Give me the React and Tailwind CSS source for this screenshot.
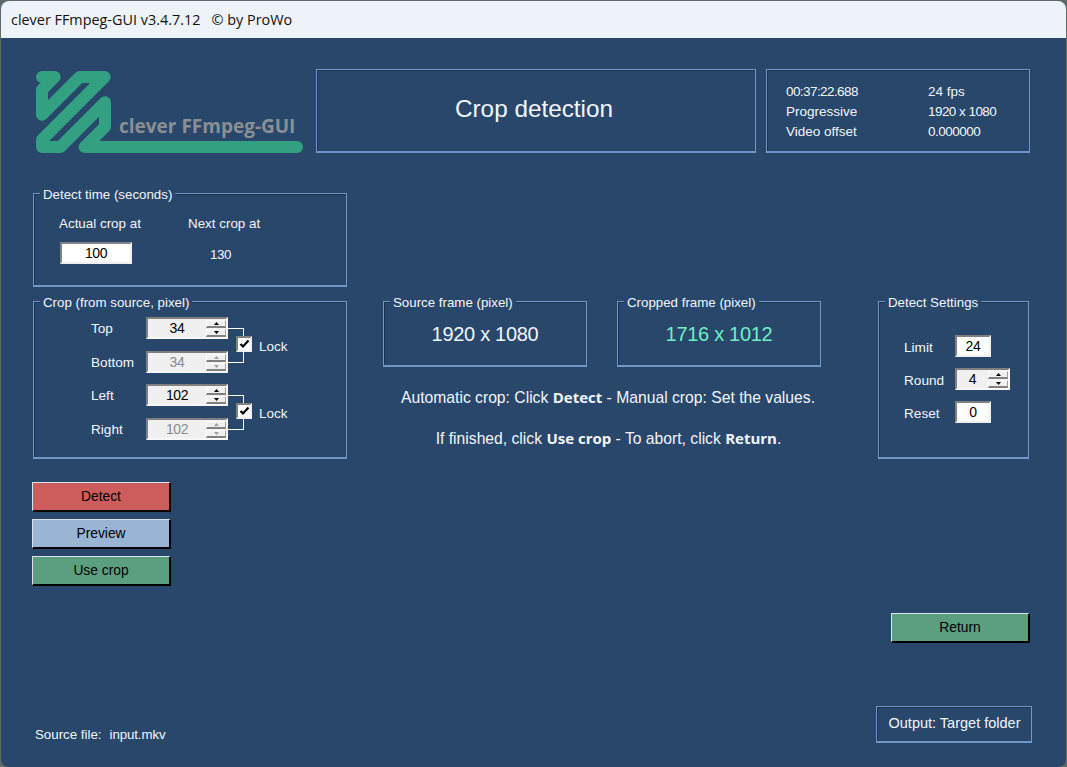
const arial = { fontFamily: '"Liberation Sans", Arial, sans-serif' };
const open = { fontFamily: '"Open Sans", sans-serif' };

function Group({ title, className = "", children }) {
  return (
    <fieldset className={`min-w-0 border border-b-2 border-[#6f97c9] shadow-[inset_1px_1px_0_#1b3150] ${className}`}>
      <legend className="ml-[6px] translate-y-[1px] bg-[#28476b] px-[3px] text-[13.3px] leading-[15px] text-[#f2f6fc]">{title}</legend>
      {children}
    </fieldset>
  );
}

function Box({ className = "", children }) {
  return (
    <div className={`border border-b-2 border-[#6f97c9] shadow-[inset_1px_1px_0_#1b3150] ${className}`}>{children}</div>
  );
}

function Arrow({ up, disabled }) {
  return (
    <svg width="5" height="3" viewBox="0 0 5 3">
      <path d={up ? "M2.5 0L5 3H0Z" : "M0 0H5L2.5 3Z"} fill={disabled ? "#a0a0a0" : "#000"} />
    </svg>
  );
}

function SpinBtn({ up, disabled }) {
  return (
    <div className="flex h-[8px] w-[20px] items-center justify-center border-t border-r border-b-2 border-l border-t-white border-r-[#a0a0a0] border-b-[#808080] border-l-white bg-[#f0f0f0]">
      <Arrow up={up} disabled={disabled} />
    </div>
  );
}

function Spin({ value, disabled, w = "w-[82px]" }) {
  return (
    <div className={`flex h-[22px] ${w} items-center border-2 border-t-[#808080] border-r-[#f8f8f8] border-b-[#f8f8f8] border-l-[#808080] bg-[#f0f0f0]`}>
      <span className={`flex-1 text-center text-[14px] tracking-[-0.4px] ${disabled ? "text-[#8a8a8a]" : "text-black"}`}>{value}</span>
      <div className="flex flex-col gap-[1px]">
        <SpinBtn up disabled={disabled} />
        <SpinBtn disabled={disabled} />
      </div>
    </div>
  );
}

function Field({ value, className = "" }) {
  return (
    <div className={`flex h-[22px] items-center justify-center border-2 border-t-[#808080] border-r-[#f0f0f0] border-b-[#f0f0f0] border-l-[#808080] bg-white text-[14px] tracking-[-0.4px] text-black ${className}`}>
      {value}
    </div>
  );
}

function LockPair({ a, b, aLabel, bLabel }) {
  return (
    <div className="relative flex flex-col gap-[12px] pl-[57px]">
      <div className="flex h-[22px] items-center">
        <span className="w-[55px] translate-y-[1px] text-[13.6px]">{aLabel}</span>
        <Spin value={a} />
      </div>
      <div className="flex h-[22px] items-center">
        <span className="w-[55px] translate-y-[1px] text-[13.6px]">{bLabel}</span>
        <Spin value={b} disabled />
      </div>
      <div className="absolute top-[11px] left-[194px] h-[8px] w-[16px] border-t border-r border-white" />
      <div className="absolute top-[35px] left-[194px] h-[11px] w-[16px] border-r border-b border-white" />
      <div className="absolute top-[19px] left-[202px] flex h-[16px] w-[16px] items-center justify-center border-2 border-t-[#808080] border-r-[#f0f0f0] border-b-[#f0f0f0] border-l-[#808080] bg-white">
        <svg width="11" height="10" viewBox="0 0 11 10">
          <path d="M1.5 5L4 7.5L9.5 1.5" fill="none" stroke="#000" strokeWidth="2.2" />
        </svg>
      </div>
      <span className="absolute top-[21px] left-[225px] text-[13.5px] leading-[17px]">Lock</span>
    </div>
  );
}

function Btn({ label, bg, className = "" }) {
  return (
    <div className={`flex h-[30px] w-[139px] items-center justify-center border border-r-2 border-b-2 border-t-[#d8e4ee] border-r-black border-b-black border-l-[#d8e4ee] pt-[1px] text-[13.8px] text-black ${bg} ${className}`}>
      {label}
    </div>
  );
}

export default function App() {
  return (
    <div className="h-[767px] w-[1067px] overflow-hidden bg-[#5d6a68] px-[1px] pt-[1px]" style={arial}>
      <div className="flex h-[766px] flex-col overflow-hidden rounded-[8px] bg-[#28476b] text-[#f2f6fc]">
        <div className="flex h-[37px] shrink-0 items-center bg-[#eef3fa] pl-[10px] text-[14.4px] text-[#111]" style={open}>
          clever FFmpeg-GUI v3.4.7.12&nbsp;&nbsp;&nbsp;© by ProWo
        </div>

        <div className="flex flex-1 flex-col pt-[31px] pr-[35px] pl-[31px]">
          <div className="flex items-start">
            <div className="relative mt-[2px] ml-[4px] h-[82px] w-[268px] shrink-0">
              <svg width="268" height="82" viewBox="108 213 804 246" className="block">
                <path
                  d="M126 231H164L126 269V344L239 231H314L126 419V441H181L315 307V380L254 441H891"
                  fill="none"
                  stroke="#32a081"
                  strokeWidth="36"
                  strokeLinejoin="round"
                  strokeLinecap="round"
                />
              </svg>
              <span className="absolute top-[43px] left-[83px] text-[19px] leading-[24px] font-bold text-[#8b8f94]" style={open}>
                clever FFmpeg-GUI
              </span>
            </div>
            <Box className="ml-[12px] flex h-[84px] w-[440px] items-center justify-center pr-[4px] pb-[2px] text-[24.3px] text-[#f2f6fc]">
              Crop detection
            </Box>
            <Box className="ml-[10px] flex h-[84px] w-[264px] pt-[12px] pl-[19px] text-[13.5px] leading-[20px]">
              <div className="w-[142px]">
                <div className="tracking-[-0.58px]">00:37:22.688</div>
                <div>Progressive</div>
                <div>Video offset</div>
              </div>
              <div>
                <div>24 fps</div>
                <div className="tracking-[-0.55px]">1920 x 1080</div>
                <div className="tracking-[-0.5px]">0.000000</div>
              </div>
            </Box>
          </div>

          <div className="flex items-start">
            <div className="ml-[1px] flex w-[314px] shrink-0 flex-col">
              <Group title="Detect time (seconds)" className="mt-[33px] h-[101px]">
                <div className="grid grid-cols-[129px_1fr] pt-[14px] pl-[25px] text-[13.4px]">
                  <span className="leading-[18px]">Actual crop at</span>
                  <span className="leading-[18px]">Next crop at</span>
                  <Field value="100" className="mt-[9px] w-[72px] translate-x-[1px]" />
                  <span className="mt-[10px] ml-[22px] leading-[24px] tracking-[-0.4px]">130</span>
                </div>
              </Group>
              <Group title="Crop (from source, pixel)" className="mt-[7px] h-[165px]">
                <div className="flex flex-col gap-[11px] pt-[8px] leading-[22px]">
                  <LockPair a="34" b="34" aLabel="Top" bLabel="Bottom" />
                  <LockPair a="102" b="102" aLabel="Left" bLabel="Right" />
                </div>
              </Group>
              <div className="mt-[23px] -ml-[1px] flex flex-col gap-[7px]">
                <Btn label="Detect" bg="bg-[#cd5c5c]" />
                <Btn label="Preview" bg="bg-[#9ab4d3]" />
                <Btn label="Use crop" bg="bg-[#5c9e80]" />
              </div>
            </div>

            <div className="mt-[141px] ml-[36px] flex w-[438px] shrink-0 flex-col">
              <div className="flex gap-[30px]">
                <Group title="Source frame (pixel)" className="h-[73px] w-[204px]">
                  <div className="pt-[12px] text-center text-[20px] leading-[26px] tracking-[-0.3px]">1920 x 1080</div>
                </Group>
                <Group title="Cropped frame (pixel)" className="h-[73px] w-[204px]">
                  <div className="pt-[12px] text-center text-[20px] leading-[26px] tracking-[-0.3px] text-[#70eec4]">1716 x 1012</div>
                </Group>
              </div>
              <div className="mt-[20px] pl-[12px] text-center text-[15.7px] leading-[20px] whitespace-nowrap">
                Automatic crop: Click <b className="text-[15px] font-bold" style={open}>Detect</b> - Manual crop: Set the values.
              </div>
              <div className="mt-[20px] pl-[13px] text-center text-[15.7px] leading-[20px] whitespace-nowrap">
                If finished, click <b className="text-[15px] font-bold" style={open}>Use crop</b> - To abort, click <b className="text-[15px] font-bold" style={open}>Return</b>.
              </div>
            </div>

            <div className="mt-[141px] ml-[57px] flex w-[151px] shrink-0 flex-col">
              <Group title="Detect Settings" className="h-[165px]">
                <div className="grid grid-cols-[51px_1fr] items-center gap-y-[11px] pt-[26px] pl-[25px] text-[13.6px]">
                  <span className="translate-y-[2px]">Limit</span>
                  <Field value="24" className="w-[36px]" />
                  <span className="translate-y-[2px]">Round</span>
                  <Spin value="4" w="w-[55px]" />
                  <span className="translate-y-[2px]">Reset</span>
                  <Field value="0" className="w-[36px]" />
                </div>
              </Group>
              <Btn label="Return" bg="bg-[#5c9e80]" className="mt-[154px] ml-[13px]" />
            </div>
          </div>

          <div className="mt-[63px] flex items-end justify-between">
            <div className="pl-[3px] text-[13.3px] leading-[16px]">Source file:<span className="ml-[8px] tracking-[-0.1px]">input.mkv</span></div>
            <Box className="-mr-[1px] flex h-[37px] w-[156px] items-center justify-center pl-[1px] text-[14.5px]">Output: Target folder</Box>
          </div>
        </div>
      </div>
    </div>
  );
}
